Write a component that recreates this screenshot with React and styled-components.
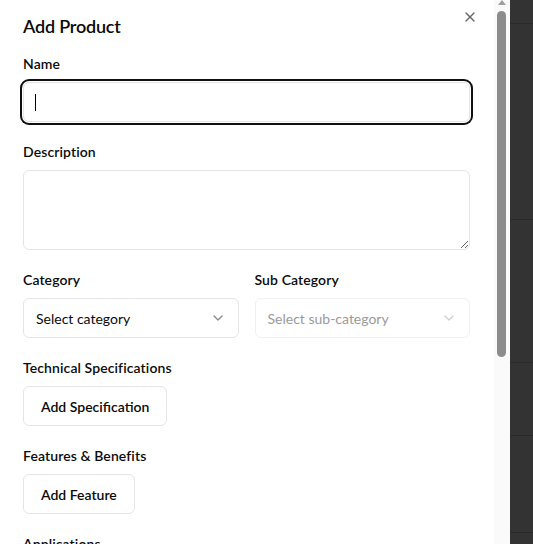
import React from "react";
import styled, { createGlobalStyle } from "styled-components";
import { X, ChevronDown } from "lucide-react";

const text_dark = "#0a0a0a";
const border_grey = "#e5e5e5";
const backdrop = "#333333";
const track_grey = "#fafafa";

const GlobalStyle = createGlobalStyle`
    html, body {
        margin: 0;
        padding: 0;
        height: 100%;
        overflow: hidden;
        background: ${backdrop};
    }
    body {
        font-family: "Segoe UI", Lato, "Noto Sans", sans-serif;
        color: ${text_dark};
    }
    * {
        box-sizing: border-box;
    }
`;

const behind_rows = [24, 196, 143, 73, 97, 40];

export default function App() {
    return (
        <>
            <GlobalStyle />
            <Page>
                <Panel>
                    <CloseButton aria-label="Close">
                        <X size={16} strokeWidth={2} />
                    </CloseButton>
                    <Body>
                        <Title>Add Product</Title>

                        <Field>
                            <Label>Name</Label>
                            <CaretWrap>
                                <Input $focused type="text" />
                            </CaretWrap>
                        </Field>

                        <Field>
                            <Label>Description</Label>
                            <TextArea />
                        </Field>

                        <Columns>
                            <Field>
                                <Label>Category</Label>
                                <Select>
                                    <span>Select category</span>
                                    <ChevronDown size={16} />
                                </Select>
                            </Field>
                            <Field>
                                <Label>Sub Category</Label>
                                <Select disabled $disabled>
                                    <span>Select sub-category</span>
                                    <ChevronDown size={16} />
                                </Select>
                            </Field>
                        </Columns>

                        <Field>
                            <Label>Technical Specifications</Label>
                            <OutlineButton>Add Specification</OutlineButton>
                        </Field>

                        <Field>
                            <Label>Features &amp; Benefits</Label>
                            <OutlineButton>Add Feature</OutlineButton>
                        </Field>

                        <Field>
                            <Label>Applications</Label>
                            <OutlineButton>Add Application</OutlineButton>
                        </Field>
                    </Body>
                </Panel>
                <ScrollTrack>
                    <ScrollArrow />
                    <ScrollThumb $length={346} />
                </ScrollTrack>
                <Behind>
                    {behind_rows.map((h, i) => (
                        <BehindRow key={i} $height={h} />
                    ))}
                </Behind>
            </Page>
        </>
    );
}

const Page = styled.div`
    display: flex;
    height: 100vh;
    width: 100%;
`;

const Panel = styled.div`
    position: relative;
    width: 494px;
    flex-shrink: 0;
    height: 100%;
    background: #ffffff;
    overflow: hidden;
`;

const ScrollTrack = styled.div`
    width: 16px;
    flex-shrink: 0;
    height: 100%;
    background: ${track_grey};
    display: flex;
    flex-direction: column;
    align-items: center;
    padding: 0 1px 0 0;
`;

const ScrollArrow = styled.div`
    width: 0;
    height: 0;
    border-left: 4px solid transparent;
    border-right: 4px solid transparent;
    border-bottom: 5px solid #9e9e9e;
    margin-bottom: 6px;
`;

const ScrollThumb = styled.div`
    width: 9px;
    height: ${({ $length }) => $length}px;
    border-radius: 5px;
    background: #8c8c8c;
`;

const CloseButton = styled.button`
    position: absolute;
    top: 9px;
    right: 16px;
    width: 16px;
    height: 16px;
    padding: 0;
    border: none;
    background: transparent;
    color: #333;
    opacity: 0.75;
    display: flex;
    align-items: center;
    justify-content: center;
    cursor: pointer;
`;

const Body = styled.div`
    display: flex;
    flex-direction: column;
    gap: 20px;
    padding: 14px 24px 24px 23px;
`;

const Title = styled.h2`
    margin: 0 0 -4px 0;
    font-size: 18px;
    line-height: 24px;
    font-weight: 600;
    letter-spacing: -0.2px;
`;

const Field = styled.div`
    display: flex;
    flex-direction: column;
    align-items: flex-start;
    gap: 8px;
    min-width: 0;
`;

const Label = styled.label`
    font-size: 14px;
    line-height: 20px;
    font-weight: 600;
    letter-spacing: 0.1px;
`;

const CaretWrap = styled.div`
    position: relative;
    width: 100%;

    &::after {
        content: "";
        position: absolute;
        left: 12px;
        top: 12px;
        width: 1px;
        height: 17px;
        background: #000;
    }
`;

const Input = styled.input`
    display: block;
    width: 100%;
    height: 40px;
    padding: 0 12px;
    border: 1px solid ${border_grey};
    border-radius: 6px;
    font: inherit;
    font-size: 14px;
    outline: none;
    background: #fff;
    box-shadow: ${({ $focused }) => $focused ? "0 0 0 1px #ffffff, 0 0 0 3px #101010" : "none"};
`;

const TextArea = styled.textarea`
    display: block;
    width: 100%;
    height: 80px;
    padding: 8px 12px;
    border: 1px solid ${border_grey};
    border-radius: 6px;
    font: inherit;
    font-size: 14px;
    resize: vertical;
    outline: none;
`;

const Columns = styled.div`
    display: grid;
    grid-template-columns: 1fr 1fr;
    gap: 16px;
`;

const Select = styled.button`
    width: 100%;
    height: 40px;
    padding: 0 12px;
    display: flex;
    align-items: center;
    justify-content: space-between;
    border: 1px solid ${({ $disabled }) => $disabled ? "#f0f0f0" : border_grey};
    border-radius: 6px;
    background: #fff;
    font: inherit;
    font-size: 14px;
    color: ${({ $disabled }) => $disabled ? "#9a9a9a" : text_dark};
    text-align: left;
    cursor: pointer;

    svg {
        color: ${({ $disabled }) => $disabled ? "#cfcfcf" : "#8a8a8a"};
        flex-shrink: 0;
    }
`;

const OutlineButton = styled.button`
    height: 40px;
    padding: 0 17px;
    border: 1px solid ${border_grey};
    border-radius: 6px;
    background: #fff;
    font: inherit;
    font-size: 14px;
    font-weight: 600;
    color: ${text_dark};
    cursor: pointer;
`;

const Behind = styled.div`
    flex: 1;
    display: flex;
    flex-direction: column;
    background: ${backdrop};
`;

const BehindRow = styled.div`
    height: ${({ $height }) => $height}px;
    flex-shrink: 0;
    border-bottom: 1px solid #2a2a2a;
`;
